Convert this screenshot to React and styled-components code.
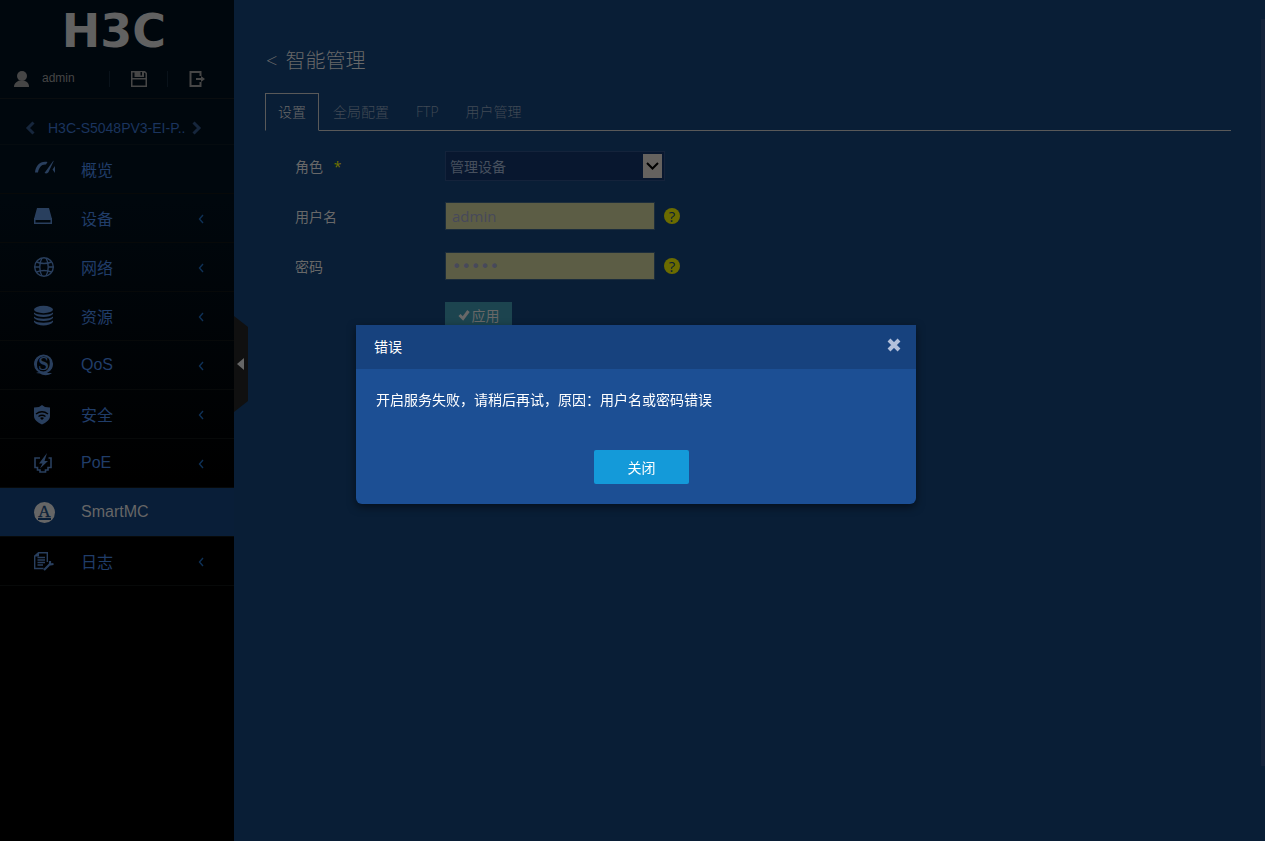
import React, { useState } from 'react'
import styled, { createGlobalStyle } from 'styled-components'

const GlobalStyle = createGlobalStyle`
  * {
    box-sizing: border-box;
  }

  body {
    margin: 0;
    background-color: #fff;
    font-family: 'Open Sans', 'Noto Sans CJK SC', sans-serif;
    font-size: 14px;
  }

  button,
  input,
  select {
    font: inherit;
    border-radius: 0;
  }

  a {
    text-decoration: none;
  }
`

const StyledPage = styled.div`
  display: flex;
  min-height: calc(100vh - 4px);
  background-color: #091e36;
`

const StyledSidebar = styled.aside`
  position: relative;
  flex: 0 0 234px;
  font-family: 'Liberation Sans', 'Noto Sans CJK SC', sans-serif;
  background: linear-gradient(#00070d 200px, #000 480px);
`

const StyledLogo = styled.div`
  height: 60px;
  padding-right: 6px;
  font-family: 'DejaVu Sans', sans-serif;
  font-size: 46px;
  font-weight: bold;
  line-height: 62px;
  text-align: center;
  color: #616161;
`

const StyledUserBar = styled.div`
  display: flex;
  align-items: center;
  height: 39px;
  border-bottom: 1px solid #0a0d0f;
  color: #464646;
`

const StyledUser = styled.div`
  display: flex;
  flex: 1;
  gap: 12px;
  padding-left: 14px;
  font-size: 12px;
`

const StyledIconButton = styled.button`
  display: flex;
  align-items: center;
  justify-content: center;
  width: 58px;
  height: 16px;
  padding: 0;
  border: 0;
  border-left: 1px solid #09121a;
  background: none;
  color: inherit;

  &:last-child {
    margin-right: 9px;
  }
`

const StyledDevice = styled.div`
  display: flex;
  align-items: center;
  gap: 13px;
  height: 46px;
  padding: 12px 32px 0 25px;
  border-bottom: 1px solid #050b0f;
  color: #1b345e;
`

const StyledDeviceName = styled.span`
  flex: 1;
  white-space: nowrap;
`

const StyledArrowButton = styled.button`
  display: flex;
  width: 10px;
  padding: 0;
  border: 0;
  background: none;
  color: #16263c;

  &:last-child {
    margin-left: -13px;
  }
`

const StyledMenuItem = styled.a`
  display: flex;
  align-items: center;
  height: 49px;
  padding: 0 30px 0 33px;
  border-bottom: 1px solid #070909;
  font-size: 16px;
  color: ${({ $active }) => ($active ? '#666' : '#203d69')};
  ${({ $active }) => $active && 'background-color: #091e38;'}
`

const StyledMenuIcon = styled.span`
  display: flex;
  width: 48px;
  color: ${({ $active }) => ($active ? '#666' : '#293f5e')};
`

const StyledMenuLabel = styled.span`
  flex: 1;
`

const StyledCollapse = styled.button`
  position: absolute;
  top: 316px;
  left: 100%;
  width: 14px;
  height: 96px;
  padding: 0;
  border: 0;
  background: none;

  svg {
    display: block;
  }
`

const StyledMain = styled.main`
  flex: 1;
  min-width: 0;
  padding: 45px 34px 0 31px;
  color: #686868;
`

const StyledTitle = styled.h1`
  display: flex;
  gap: 8px;
  margin: 0 0 16px 1px;
  font-size: 20px;
  font-weight: 300;
  line-height: 32px;

  a {
    color: inherit;
  }
`

const StyledTabs = styled.nav`
  display: flex;
  height: 38px;
  border-bottom: 1px solid #595959;
`

const StyledTab = styled.a`
  height: 38px;
  padding: 0 12px;
  border: 1px solid ${({ $active }) => ($active ? '#595959' : 'transparent')};
  border-bottom-color: ${({ $active }) =>
    $active ? '#091e36' : 'transparent'};
  font-weight: 300;
  line-height: 36px;
  color: ${({ $active }) => ($active ? '#686868' : '#414a55')};

  & + & {
    margin-left: 1px;
  }
`

const StyledForm = styled.form`
  display: grid;
  justify-items: start;
  row-gap: 20px;
  padding: 20px 0 0 30px;
`

const StyledRow = styled.div`
  display: flex;
  align-items: center;
  height: 30px;
`

const StyledLabel = styled.label`
  width: 150px;

  span {
    margin-left: 7px;
    color: #737300;
  }
`

const StyledSelectWrapper = styled.div`
  position: relative;
  width: 220px;
  height: 30px;

  svg {
    position: absolute;
    top: 3px;
    right: 3px;
    pointer-events: none;
  }
`

const StyledSelect = styled.select`
  width: 100%;
  height: 100%;
  padding: 0 4px;
  border: 1px solid #14233b;
  appearance: none;
  background-color: #08172f;
  color: #47505e;
`

const StyledInput = styled.input`
  width: 210px;
  height: 28px;
  padding: 0 6px;
  border: 1px solid #1c2d3c;
  background-color: #5c5d45;
  font-size: 15px;
  color: #47495a;

  &[type='password'] {
    font-family: 'DejaVu Sans', sans-serif;
    font-size: 16px;
  }
`

const StyledHelp = styled.button`
  width: 16px;
  height: 16px;
  margin-left: 9px;
  padding: 0;
  border: 0;
  border-radius: 50%;
  background-color: #6b6b00;
  color: #091e36;
  font-size: 15px;
  line-height: 16px;
`

const StyledApply = styled.button`
  display: flex;
  align-items: center;
  justify-content: center;
  gap: 2px;
  width: 67px;
  height: 26px;
  margin: 1px 0 0 150px;
  padding: 0;
  border: 0;
  background-color: #1c444f;
  color: #686868;
`

const StyledScrollbar = styled.div`
  position: absolute;
  top: 19px;
  right: 0;
  width: 4px;
  height: 747px;
  background-color: #14233b;
`

const StyledOverlay = styled.div`
  position: fixed;
  inset: 0;
  display: flex;
  align-items: flex-start;
  justify-content: center;
  padding: 325px 0 0 7px;
`

const StyledDialog = styled.section`
  width: 560px;
  border-radius: 0 0 6px 6px;
  background-color: #1c4f94;
  box-shadow: 0 3px 9px rgba(0, 0, 0, 0.5);
  color: #fff;
`

const StyledDialogHeader = styled.header`
  display: flex;
  align-items: center;
  justify-content: space-between;
  height: 44px;
  padding: 0 15px 2px 18px;
  background-color: #17427e;

  h2 {
    margin: 0;
    font-size: 14px;
    font-weight: normal;
  }
`

const StyledClose = styled.button`
  display: flex;
  padding: 0 0 2px;
  border: 0;
  background: none;
  color: #b4c1db;
`

const StyledMessage = styled.p`
  margin: 0;
  padding: 20px 20px 0;
  line-height: 22px;
`

const StyledDialogFooter = styled.footer`
  display: flex;
  justify-content: center;
  padding: 39px 0 20px 11px;
`

const StyledDialogButton = styled.button`
  width: 95px;
  height: 34px;
  border: 0;
  border-radius: 2px;
  background-color: #149ad9;
  color: #fff;
`

const Icon = ({ width = 22, height = 22, children }) => (
  <svg
    width={width}
    height={height}
    viewBox={`0 0 ${width} ${height}`}
    fill="currentColor"
    aria-hidden="true"
  >
    {children}
  </svg>
)

const OverviewIcon = () => (
  <Icon>
    <path d="M2 14.500C2.500 7.500 7.500 2.500 14.500 4L13 6.500C8.500 6 6 9.500 5 14.500Z" />
    <path d="M20.500 2.500L11.500 15C13.500 16 15.500 15 16 13L20.500 3.500Z" />
    <path d="M22 8V15L19.500 11.500Z" />
  </Icon>
)

const DeviceIcon = () => (
  <Icon>
    <path d="M4 1H16L19 12H1Z" />
    <path d="M1 11H19V17H1ZM2.500 13V15.500H17.500V13Z" fillRule="evenodd" />
  </Icon>
)

const NetworkIcon = () => (
  <Icon>
    <g fill="none" stroke="currentColor" strokeWidth="1.400">
      <circle cx="11" cy="11" r="9.300" />
      <path d="M9 2C6 7 6 15 9 20M13 2C16 7 16 15 13 20" />
      <path d="M3.500 6Q11 9 18.500 6M1.500 11H6.500M15.500 11H20.500M3.500 16Q11 13 18.500 16" />
    </g>
  </Icon>
)

const ResourceIcon = () => (
  <Icon>
    <ellipse cx="10.500" cy="4.500" rx="9.500" ry="3.700" />
    <path d="M1 7.500C4 10.500 17 10.500 20 7.500V9C17 13 4 13 1 9Z" />
    <path d="M1 11.500C4 14.500 17 14.500 20 11.500V13C17 17 4 17 1 13Z" />
    <path d="M1 15.500C4 18.500 17 18.500 20 15.500V17C17 21.500 4 21.500 1 17Z" />
  </Icon>
)

const QosIcon = () => (
  <Icon>
    <circle
      cx="10.500"
      cy="10"
      r="8.500"
      fill="none"
      stroke="currentColor"
      strokeWidth="2"
    />
    <path d="M10 2C3 2 1 6 1.500 11L5 16C3 9 4 4 10 2ZM11 18C18 17 20 14 19.500 9L16 4C18 11 16 16 11 18Z" />
    <text
      x="10.500"
      y="16"
      textAnchor="middle"
      fontFamily="Liberation Serif, serif"
      fontSize="19"
      fontWeight="bold"
    >
      S
    </text>
    <path d="M3 19C8 16.500 11 19.500 19 19C15 22 10 21.500 7 19.500Z" />
  </Icon>
)

const SecurityIcon = () => (
  <Icon>
    <path d="M9 2L12 4L17 4.500V13C17 17 13 19.500 9 21.500C5 19.500 1 17 1 13V4.500L6 4Z" />
    <path
      d="M3 11Q9 6.500 15 11M5.500 13.500Q9 11 12.500 13.500"
      fill="none"
      stroke="#000"
      strokeWidth="1.400"
    />
    <path d="M7 15Q9 13.500 11 15L9 17Z" fill="#000" />
  </Icon>
)

const PoeIcon = () => (
  <Icon>
    <path
      d="M7 6H2V15.500H4.500V18H7V20H12.500V18H15V15.500H18V6H15.500"
      fill="none"
      stroke="currentColor"
      strokeWidth="1.600"
    />
    <path d="M14 1L6 11.500H9.500L7 16.500L15 9H11.500Z" />
  </Icon>
)

const SmartIcon = () => (
  <Icon>
    <circle cx="11.500" cy="11.500" r="10.500" />
    <text
      x="11.500"
      y="16"
      textAnchor="middle"
      fontFamily="Liberation Serif, serif"
      fontSize="17"
      fill="#091e38"
      stroke="#091e38"
      strokeWidth="0.400"
    >
      A
    </text>
    <path d="M5 17H18V19H5Z" fill="#091e38" />
  </Icon>
)

const LogIcon = () => (
  <Icon>
    <path
      d="M10.500 18.500H1.700V6L5.500 2.700H14.300V12M4.500 7.500H12M4.500 10H12M4.500 12.500H12M4.500 15H10"
      fill="none"
      stroke="currentColor"
      strokeWidth="1.400"
    />
    <path d="M1 6.500L6 2V6.500Z" />
    <path
      d="M11 20L16.500 14.500M17 11V14.500L20.500 14"
      fill="none"
      stroke="currentColor"
      strokeWidth="2.200"
    />
  </Icon>
)

const Chevron = () => (
  <Icon width={6} height={12}>
    <path
      d="M5 3L1.500 7L5 11"
      fill="none"
      stroke="#0e3157"
      strokeWidth="1.400"
    />
  </Icon>
)

const menu = [
  { label: '概览', icon: OverviewIcon, leaf: true },
  { label: '设备', icon: DeviceIcon },
  { label: '网络', icon: NetworkIcon },
  { label: '资源', icon: ResourceIcon },
  { label: 'QoS', icon: QosIcon },
  { label: '安全', icon: SecurityIcon },
  { label: 'PoE', icon: PoeIcon },
  { label: 'SmartMC', icon: SmartIcon, leaf: true, active: true },
  { label: '日志', icon: LogIcon },
]

const tabs = ['设置', '全局配置', 'FTP', '用户管理']

const Sidebar = () => (
  <StyledSidebar>
    <StyledLogo>H3C</StyledLogo>
    <StyledUserBar>
      <StyledUser>
        <Icon width={16} height={16}>
          <circle cx="8" cy="5" r="5" />
          <path d="M0 16C0 12 3 10.500 5 9.500H10C13 10.500 15 12 15 16Z" />
        </Icon>
        admin
      </StyledUser>
      <StyledIconButton type="button" aria-label="保存">
        <Icon width={16} height={16}>
          <path
            d="M0 0H14L16 2V16H0ZM1.500 1.500V7H14.500V2.500L13 1.500V6H3.500V1.500ZM1.500 8.500V14.500H14.500V8.500ZM9.500 1V4.500H11V1Z"
            fillRule="evenodd"
          />
        </Icon>
      </StyledIconButton>
      <StyledIconButton type="button" aria-label="退出">
        <Icon width={16} height={16}>
          <path
            d="M11.500 5V1H1.500V15H11.500V11"
            fill="none"
            stroke="currentColor"
            strokeWidth="2"
          />
          <path d="M7 7H12V5L16 8L12 11V9H7Z" />
        </Icon>
      </StyledIconButton>
    </StyledUserBar>
    <StyledDevice>
      <StyledArrowButton type="button" aria-label="上一台">
        <Icon width={10} height={14}>
          <path
            d="M8.500 1.500L3 7L8.500 12.500"
            fill="none"
            stroke="currentColor"
            strokeWidth="3"
          />
        </Icon>
      </StyledArrowButton>
      <StyledDeviceName>H3C-S5048PV3-EI-P..</StyledDeviceName>
      <StyledArrowButton type="button" aria-label="下一台">
        <Icon width={10} height={14}>
          <path
            d="M1.500 1.500L7 7L1.500 12.500"
            fill="none"
            stroke="currentColor"
            strokeWidth="3"
          />
        </Icon>
      </StyledArrowButton>
    </StyledDevice>
    <nav>
      {menu.map(({ label, icon: MenuIcon, leaf, active }) => (
        <StyledMenuItem key={label} href="#" $active={active}>
          <StyledMenuIcon $active={active}>
            <MenuIcon />
          </StyledMenuIcon>
          <StyledMenuLabel>{label}</StyledMenuLabel>
          {!leaf && <Chevron />}
        </StyledMenuItem>
      ))}
    </nav>
    <StyledCollapse type="button" aria-label="收起">
      <Icon width={14} height={96}>
        <path d="M0 0L14 11V85L0 96Z" fill="#101010" />
        <path d="M3 48L10 42V54Z" fill="#666" />
      </Icon>
    </StyledCollapse>
  </StyledSidebar>
)

const ErrorDialog = ({ onClose }) => (
  <StyledOverlay>
    <StyledDialog role="dialog" aria-labelledby="dialog-title">
      <StyledDialogHeader>
        <h2 id="dialog-title">错误</h2>
        <StyledClose type="button" aria-label="关闭" onClick={onClose}>
          <Icon width={14} height={14}>
            <path
              d="M2 2L12 12M12 2L2 12"
              stroke="currentColor"
              strokeWidth="4"
            />
          </Icon>
        </StyledClose>
      </StyledDialogHeader>
      <StyledMessage>
        开启服务失败，请稍后再试，原因：用户名或密码错误
      </StyledMessage>
      <StyledDialogFooter>
        <StyledDialogButton type="button" onClick={onClose}>
          关闭
        </StyledDialogButton>
      </StyledDialogFooter>
    </StyledDialog>
  </StyledOverlay>
)

const App = () => {
  const [open, setOpen] = useState(true)
  const [form, setForm] = useState({ username: 'admin', password: 'admin' })

  const onChangeField = e => {
    setForm({ ...form, [e.target.id]: e.target.value })
  }

  const onSubmit = e => {
    e.preventDefault()
    setOpen(true)
  }

  return (
    <>
      <GlobalStyle />
      <StyledPage>
        <Sidebar />
        <StyledMain>
          <StyledTitle>
            <a href="#">&lt;</a>
            智能管理
          </StyledTitle>
          <StyledTabs>
            {tabs.map((tab, index) => (
              <StyledTab key={tab} href="#" $active={index === 0}>
                {tab}
              </StyledTab>
            ))}
          </StyledTabs>
          <StyledForm onSubmit={onSubmit}>
            <StyledRow>
              <StyledLabel htmlFor="role">
                角色 <span>*</span>
              </StyledLabel>
              <StyledSelectWrapper>
                <StyledSelect id="role">
                  <option>管理设备</option>
                </StyledSelect>
                <Icon width={19} height={24}>
                  <path d="M0 0H19V24H0Z" fill="#65625f" />
                  <path
                    d="M4 9L9.500 14.500L15 9"
                    fill="none"
                    stroke="#000"
                    strokeWidth="2"
                  />
                </Icon>
              </StyledSelectWrapper>
            </StyledRow>
            <StyledRow>
              <StyledLabel htmlFor="username">用户名</StyledLabel>
              <StyledInput
                id="username"
                value={form.username}
                onChange={onChangeField}
              />
              <StyledHelp type="button">?</StyledHelp>
            </StyledRow>
            <StyledRow>
              <StyledLabel htmlFor="password">密码</StyledLabel>
              <StyledInput
                id="password"
                type="password"
                value={form.password}
                onChange={onChangeField}
              />
              <StyledHelp type="button">?</StyledHelp>
            </StyledRow>
            <StyledApply type="submit">
              <Icon width={12} height={12}>
                <path
                  d="M1.500 6L5 9.500L10.500 2"
                  fill="none"
                  stroke="currentColor"
                  strokeWidth="3"
                />
              </Icon>
              应用
            </StyledApply>
          </StyledForm>
        </StyledMain>
      </StyledPage>
      <StyledScrollbar />
      {open && <ErrorDialog onClose={() => setOpen(false)} />}
    </>
  )
}

export default App
